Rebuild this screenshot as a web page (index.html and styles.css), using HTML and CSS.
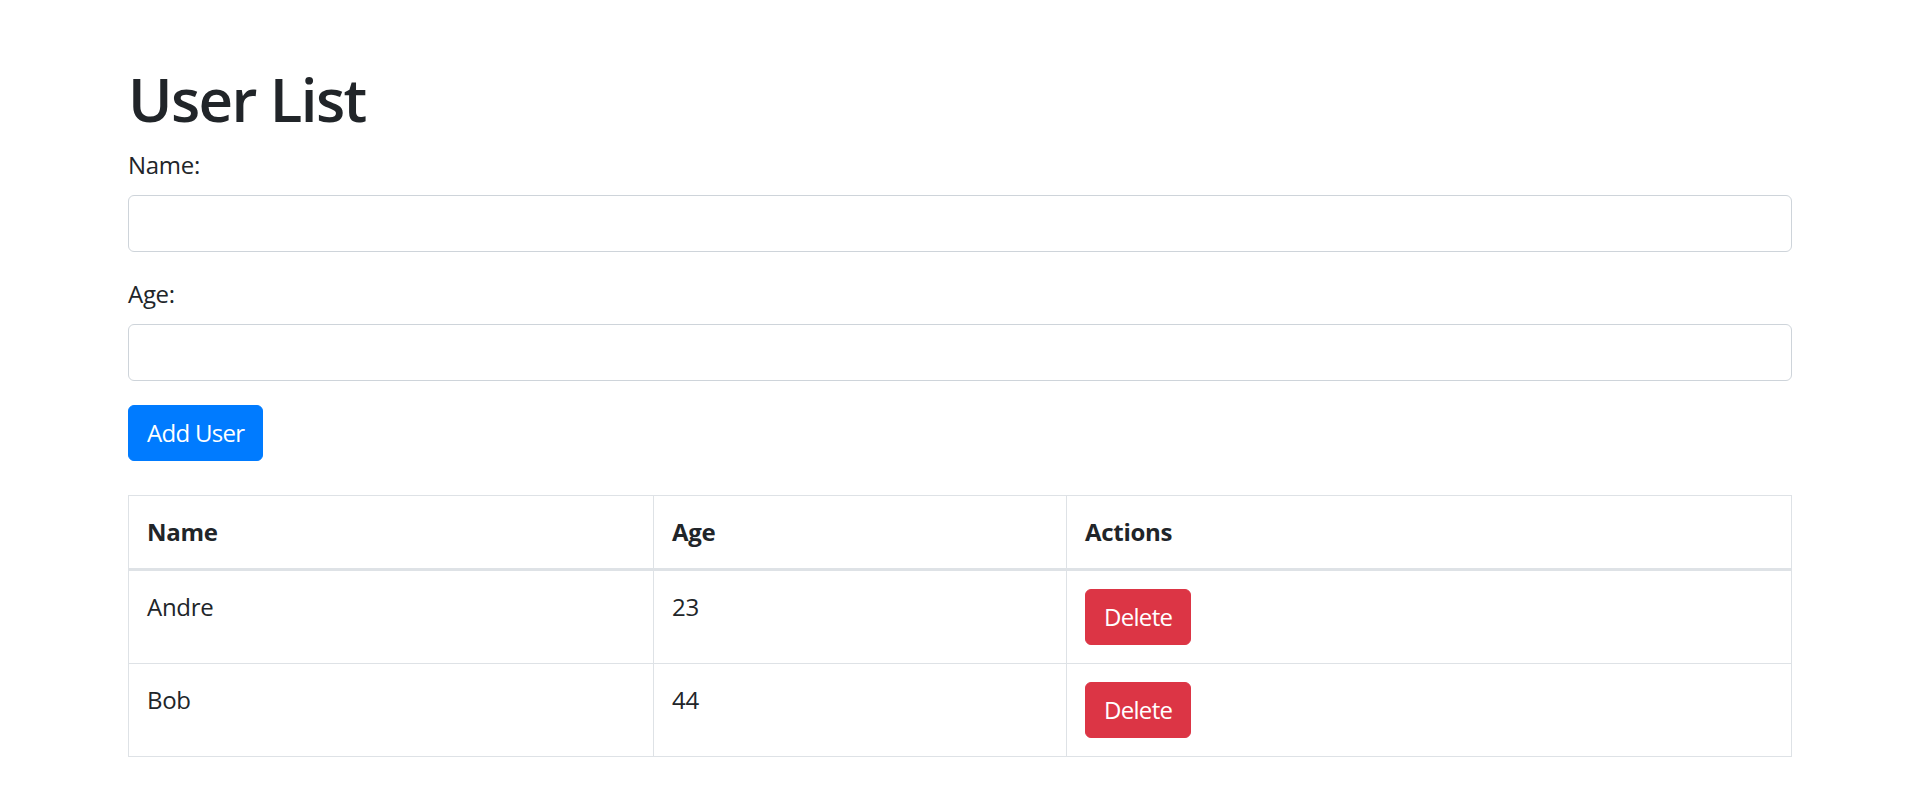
FILE: index.html
```html
<!DOCTYPE html>
<html lang="en">
<head>
<meta charset="utf-8">
<title>User List</title>
<link rel="stylesheet" href="styles.css">
</head>
<body>
<div class="container">
  <h1 class="title">User List</h1>
  <form class="user-form">
    <div class="form-group">
      <label class="form-label" for="name">Name:</label>
      <input class="form-control" id="name" type="text">
    </div>
    <div class="form-group">
      <label class="form-label" for="age">Age:</label>
      <input class="form-control" id="age" type="number">
    </div>
    <button type="button" class="btn btn-primary">Add User</button>
  </form>
  <table class="table">
    <thead>
      <tr>
        <th class="col-name">Name</th>
        <th class="col-age">Age</th>
        <th class="col-actions">Actions</th>
      </tr>
    </thead>
    <tbody>
      <tr>
        <td>Andre</td>
        <td>23</td>
        <td><button type="button" class="btn btn-danger">Delete</button></td>
      </tr>
      <tr>
        <td>Bob</td>
        <td>44</td>
        <td><button type="button" class="btn btn-danger">Delete</button></td>
      </tr>
    </tbody>
  </table>
</div>
</body>
</html>
```
FILE: styles.css
```css
* { box-sizing: border-box; }

html, body {
  margin: 0;
  padding: 0;
  background: #fff;
}

body {
  font-family: "Open Sans", "Noto Sans", "Liberation Sans", sans-serif;
  font-size: 24px;
  line-height: 36px;
  color: #212529;
}

.container {
  padding: 63px 128px 0;
}

.title {
  margin: 0 0 12px;
  font-size: 60px;
  line-height: 72px;
  font-weight: 600;
  letter-spacing: -1.6px;
}

.user-form {
  display: flex;
  flex-direction: column;
  align-items: flex-start;
}

.form-group {
  width: 100%;
  margin-bottom: 24px;
  display: flex;
  flex-direction: column;
}

.form-label {
  display: block;
  margin-bottom: 12px;
  line-height: 36px;
  letter-spacing: -0.3px;
}

.form-control {
  display: block;
  width: 100%;
  height: 57px;
  padding: 9px 18px;
  font: inherit;
  color: #495057;
  background: #fff;
  border: 1.5px solid #ced4da;
  border-radius: 6px;
  outline: none;
}

.btn {
  display: inline-block;
  font: inherit;
  font-weight: 400;
  line-height: 36px;
  padding: 9px 18px;
  border: 1.5px solid transparent;
  border-radius: 6px;
  color: #fff;
  cursor: pointer;
  letter-spacing: -0.7px;
}

.btn-primary {
  background: #007bff;
  border-color: #007bff;
}

.btn-danger {
  background: #dc3545;
  border-color: #dc3545;
}

.table {
  width: 100%;
  margin-top: 34px;
  border-collapse: collapse;
  border: 1.5px solid #dee2e6;
  letter-spacing: -0.3px;
}

.table th,
.table td {
  padding: 18px;
  text-align: left;
  vertical-align: top;
  border: 1.5px solid #dee2e6;
  line-height: 36px;
}

.table thead th {
  font-weight: 700;
  border-bottom: 3px solid #dee2e6;
  vertical-align: bottom;
}

.col-name { width: 525px; }
.col-age { width: 413px; }
.col-actions { width: auto; }
```
